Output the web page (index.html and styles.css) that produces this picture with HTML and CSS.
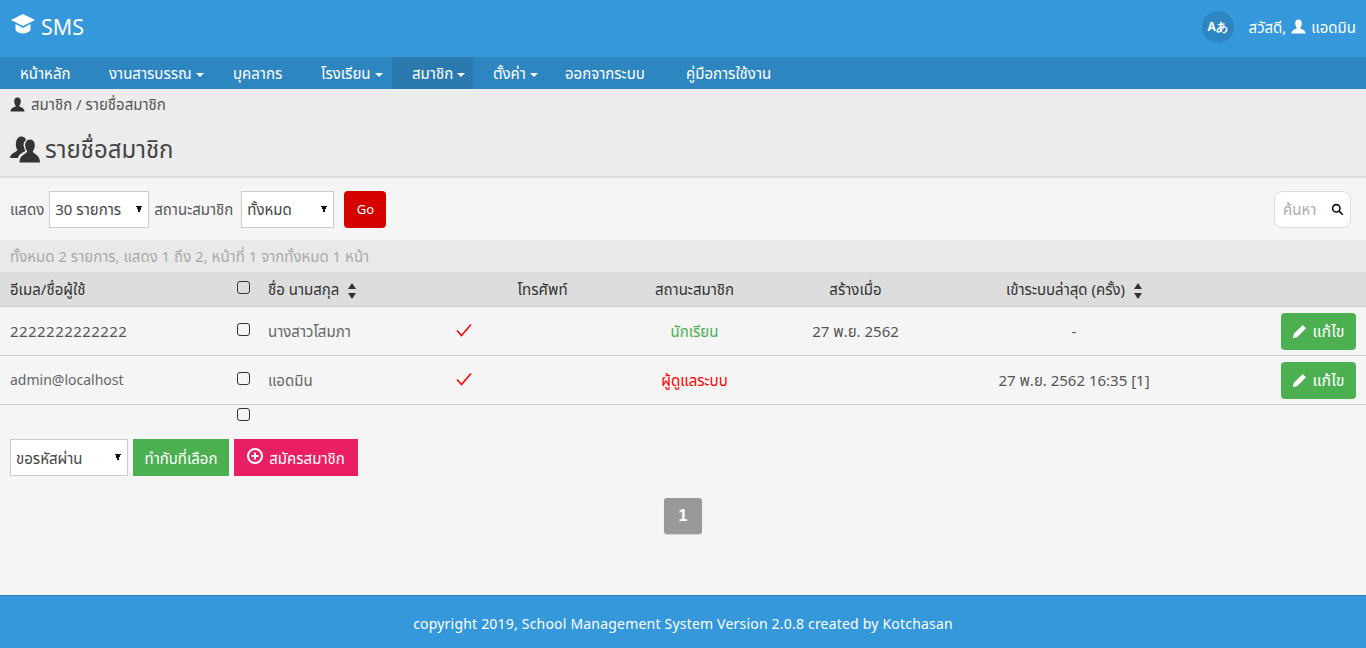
FILE: index.html
```html
<!DOCTYPE html>
<html lang="th">
<head>
	<title>รายชื่อสมาชิก</title>
	<meta charset="utf-8">
	<link rel="stylesheet" href="styles.css">
</head>
<body>
<header class="topbar">
	<a class="logo">
		<svg class="logo-icon" viewBox="0 0 24 20"><path d="M12 0 L24 6 L12 12 L0 6 Z"/><path d="M4.500 10 L12 14 L19.500 10 V16 C17 20.500 7 20.500 4.500 16 Z"/></svg>
		<span>SMS</span>
	</a>
	<div class="user">
		<span class="lang">Aあ</span>
		<span>สวัสดี,</span>
		<svg class="icon-user" viewBox="0 0 16 16"><path d="M8 0.500 C10.500 0.500 11.800 2.500 11.500 5 C11.300 7 10.500 8.500 9.800 9.500 C10.500 11 15.500 11 15.500 15.500 H0.500 C0.500 11 5.500 11 6.200 9.500 C5.500 8.500 4.700 7 4.500 5 C4.200 2.500 5.500 0.500 8 0.500 Z"/></svg>
		<span>แอดมิน</span>
	</div>
</header>
<nav class="menu">
	<a class="m1">หน้าหลัก</a>
	<a class="m2 caret">งานสารบรรณ</a>
	<a class="m3">บุคลากร</a>
	<a class="m4 caret">โรงเรียน</a>
	<a class="m5 caret active">สมาชิก</a>
	<a class="m6 caret">ตั้งค่า</a>
	<a class="m7">ออกจากระบบ</a>
	<a class="m8">คู่มือการใช้งาน</a>
</nav>
<section class="head">
	<div class="crumbs">
		<svg class="icon-crumb" viewBox="0 0 16 16"><path d="M8 0.500 C10.500 0.500 11.800 2.500 11.500 5 C11.300 7 10.500 8.500 9.800 9.500 C10.500 11 15.500 11 15.500 15.500 H0.500 C0.500 11 5.500 11 6.200 9.500 C5.500 8.500 4.700 7 4.500 5 C4.200 2.500 5.500 0.500 8 0.500 Z"/></svg>
		<span>สมาชิก / รายชื่อสมาชิก</span>
	</div>
	<h1>
		<svg class="icon-users" viewBox="0 0 30 27"><path d="M11 0.500 C14 0.500 15.500 2 16 4 C13.500 5.500 13 8.500 14 11.500 C14.500 13 15 14 15.500 15 C13 16.500 9 17.500 8 22 H0 C0 17 6.500 16.500 7.500 14 C6 12 5.500 9.500 6 6.500 C6.500 3 8.500 0.500 11 0.500 Z"/><path d="M20 3.500 C23.500 3.500 25 6.500 24.800 10 C24.600 12.500 23.500 14.500 22.700 15.500 C23.500 18 30 18.500 30 26.500 H9.500 C9.500 18.500 16.500 18 17.300 15.500 C16.500 14.500 15.400 12.500 15.200 10 C15 6.500 16.500 3.500 20 3.500 Z"/></svg>
		<span>รายชื่อสมาชิก</span>
	</h1>
</section>
<form class="filters">
	<label>แสดง</label>
	<select class="sel-count"><option>30 รายการ</option></select>
	<label class="status-label">สถานะสมาชิก</label>
	<select class="sel-status"><option>ทั้งหมด</option></select>
	<button type="button" class="btn-go">Go</button>
	<div class="search">
		<span>ค้นหา</span>
		<svg viewBox="0 0 16 16"><circle cx="6.500" cy="6.500" r="4.500"/><path d="M10 10 L14.500 14.500"/></svg>
	</div>
</form>
<div class="summary">ทั้งหมด 2 รายการ, แสดง 1 ถึง 2, หน้าที่ 1 จากทั้งหมด 1 หน้า</div>
<table class="members">
	<colgroup>
		<col class="c-email"><col class="c-check"><col class="c-name"><col class="c-tick"><col class="c-phone"><col class="c-status"><col class="c-created"><col class="c-login"><col class="c-edit">
	</colgroup>
	<thead>
		<tr>
			<th>อีเมล/ชื่อผู้ใช้</th>
			<th class="check"><span class="cb"></span></th>
			<th>ชื่อ นามสกุล <span class="sort"></span></th>
			<th></th>
			<th class="center">โทรศัพท์</th>
			<th class="center">สถานะสมาชิก</th>
			<th class="center">สร้างเมื่อ</th>
			<th class="center">เข้าระบบล่าสุด (ครั้ง) <span class="sort"></span></th>
			<th></th>
		</tr>
	</thead>
	<tbody>
		<tr>
			<td class="digits">2222222222222</td>
			<td class="check"><span class="cb"></span></td>
			<td class="soft">นางสาวโสมภา</td>
			<td class="center"><svg class="tick" viewBox="0 0 16 14"><path d="M1 7.500 L5.500 12.500 L15 1.500"/></svg></td>
			<td></td>
			<td class="center student">นักเรียน</td>
			<td class="center">27 พ.ย. 2562</td>
			<td class="center">-</td>
			<td class="edit"><button type="button" class="btn-edit"><svg viewBox="0 0 16 16"><path d="M11.500 1 L15 4.500 L5.500 14 L1 15 L2 10.500 Z"/></svg>แก้ไข</button></td>
		</tr>
		<tr>
			<td class="soft latin">admin@localhost</td>
			<td class="check"><span class="cb"></span></td>
			<td class="soft">แอดมิน</td>
			<td class="center"><svg class="tick" viewBox="0 0 16 14"><path d="M1 7.500 L5.500 12.500 L15 1.500"/></svg></td>
			<td></td>
			<td class="center admin">ผู้ดูแลระบบ</td>
			<td></td>
			<td class="center">27 พ.ย. 2562 16:35 [1]</td>
			<td class="edit"><button type="button" class="btn-edit"><svg viewBox="0 0 16 16"><path d="M11.500 1 L15 4.500 L5.500 14 L1 15 L2 10.500 Z"/></svg>แก้ไข</button></td>
		</tr>
	</tbody>
	<tfoot>
		<tr>
			<td></td>
			<td class="check"><span class="cb plain"></span></td>
			<td colspan="7"></td>
		</tr>
	</tfoot>
</table>
<div class="actions">
	<select class="sel-action"><option>ขอรหัสผ่าน</option></select>
	<button type="button" class="btn-apply">ทำกับที่เลือก</button>
	<button type="button" class="btn-add"><svg viewBox="0 0 16 16"><circle cx="8" cy="8" r="7"/><path d="M8 4.500 V11.500 M4.500 8 H11.500"/></svg>สมัครสมาชิก</button>
</div>
<div class="pager"><a>1</a></div>
<footer class="foot">copyright 2019, School Management System Version 2.0.8 created by Kotchasan</footer>
</body>
</html>
```

FILE: styles.css
```css
html, body {
	margin: 0;
	padding: 0;
}
body {
	height: 648px;
	overflow: hidden;
	background-color: #F5F5F5;
	color: #555;
	font-family: "Noto Sans", "Noto Sans Thai", "Open Sans", sans-serif;
	font-size: 15px;
	line-height: 20px;
}
.topbar {
	height: 57px;
	background-color: #3498DB;
	color: #fff;
	display: flex;
	align-items: center;
	justify-content: space-between;
	padding: 0 10px 4px 11px;
	box-sizing: border-box;
}
.logo {
	display: flex;
	align-items: center;
	gap: 6px;
	font-size: 21.500px;
}
.logo-icon {
	width: 24px;
	height: 20px;
	fill: #fff;
	margin-bottom: 6px;
}
.user {
	display: flex;
	align-items: center;
	gap: 5px;
}
.lang {
	width: 32px;
	height: 32px;
	border-radius: 50%;
	background-color: #2E86C1;
	font-size: 12px;
	font-weight: bold;
	text-align: center;
	line-height: 32px;
	margin-right: 10px;
}
.icon-user {
	width: 15px;
	height: 15px;
	fill: #fff;
}
.menu {
	height: 32px;
	background-color: #2E86C1;
	display: flex;
	color: #fff;
	line-height: 32px;
}
.menu a {
	display: block;
	box-sizing: border-box;
	padding-left: 20px;
}
.menu .m1 { width: 89px; }
.menu .m2 { width: 124px; }
.menu .m3 { width: 88px; }
.menu .m4 { width: 91px; }
.menu .m5 { width: 81px; }
.menu .m6 { width: 72px; }
.menu .m7 { width: 121px; }
.menu .m8 { width: 150px; }
.menu .active {
	background-color: #2A7AB0;
}
.caret::after {
	content: "";
	display: inline-block;
	margin-left: 4px;
	vertical-align: middle;
	border-top: 4px solid #fff;
	border-left: 4px solid transparent;
	border-right: 4px solid transparent;
}
.head {
	height: 89px;
	box-sizing: border-box;
	background-color: #ECECEC;
	border-bottom: 2px solid #DDD;
	padding: 5px 10px 0;
}
.crumbs {
	display: flex;
	align-items: center;
	gap: 6px;
}
.icon-crumb {
	width: 15px;
	height: 15px;
	fill: #333;
}
.head h1 {
	margin: 20px 0 0;
	display: flex;
	align-items: center;
	gap: 5px;
	font-size: 24px;
	font-weight: normal;
	line-height: 30px;
	color: #444;
}
.icon-users {
	width: 30px;
	height: 27px;
	fill: #333;
}
.filters {
	height: 62px;
	display: flex;
	align-items: center;
	gap: 5px;
	padding: 0 15px 0 10px;
	box-sizing: border-box;
}
.status-label {
	margin-right: 3px;
}
select {
	height: 37px;
	border: 1px solid #CCC;
	background-color: #fff;
	background-image: linear-gradient(to top right, transparent 50%, #111 50%), linear-gradient(to top left, transparent 50%, #111 50%);
	background-size: 3px 7px;
	background-repeat: no-repeat;
	background-position: right 9px center, right 6px center;
	font: inherit;
	color: #444;
	padding: 0 0 0 5px;
	appearance: none;
	border-radius: 0;
}
.sel-count { width: 100px; }
.sel-status { width: 93px; }
.sel-action { width: 118px; }
.btn-go {
	width: 42px;
	height: 37px;
	margin-left: 5px;
	border: 0;
	border-radius: 4px;
	background-color: #D50000;
	color: #fff;
	font: inherit;
	font-size: 13px;
}
.search {
	margin-left: auto;
	width: 77px;
	height: 37px;
	box-sizing: border-box;
	border: 1px solid #DDD;
	border-radius: 8px;
	background-color: #fff;
	color: #AAA;
	display: flex;
	align-items: center;
	justify-content: space-between;
	padding: 0 6px 0 8px;
}
.search svg {
	width: 13px;
	height: 13px;
	fill: none;
	stroke: #111;
	stroke-width: 2;
}
.summary {
	height: 32px;
	line-height: 32px;
	padding-left: 10px;
	background-color: #E9E9E9;
	color: #AAA;
}
.members {
	width: 1366px;
	table-layout: fixed;
	border-collapse: collapse;
}
.c-email { width: 233px; }
.c-check { width: 25px; }
.c-name { width: 187px; }
.c-tick { width: 38px; }
.c-phone { width: 119px; }
.c-status { width: 185px; }
.c-created { width: 137px; }
.c-login { width: 300px; }
.members th, .members td {
	padding: 0 0 0 10px;
	text-align: left;
}
.members th {
	height: 34px;
	background-color: #DDD;
	border-bottom: 1px solid #CCC;
	font-weight: normal;
	color: #333;
}
.members tbody td {
	height: 48px;
	border-bottom: 1px solid #CCC;
}
.members tfoot td {
	height: 18px;
}
.members .center {
	text-align: center;
	padding: 0;
}
.members .check {
	padding: 0 0 0 4px;
}
.cb {
	display: block;
	width: 11px;
	height: 11px;
	margin-bottom: 4px;
	border: 1px solid #333;
	border-radius: 3px;
}
.cb.plain {
	margin-bottom: 0;
}
.soft { color: #666; }
.digits {
	letter-spacing: 0.450px;
}
.members .latin {
	font-size: 14px;
}
.student { color: #4CAF50; }
.admin { color: #F00; }
.sort {
	display: inline-block;
	width: 0;
	height: 16px;
	margin-left: 5px;
	vertical-align: middle;
	border-left: 4px solid transparent;
	border-right: 4px solid transparent;
	position: relative;
}
.sort::before, .sort::after {
	content: "";
	position: absolute;
	left: -4px;
	border-left: 4px solid transparent;
	border-right: 4px solid transparent;
}
.sort::before {
	top: 0;
	border-bottom: 6px solid #333;
}
.sort::after {
	bottom: 0;
	border-top: 6px solid #333;
}
.tick {
	width: 16px;
	height: 14px;
	fill: none;
	stroke: #F00;
	stroke-width: 1.5;
	margin-bottom: 4px;
	vertical-align: middle;
}
.members .edit {
	padding: 0 10px 0 0;
	text-align: right;
}
.btn-edit {
	width: 75px;
	height: 37px;
	border: 0;
	border-radius: 4px;
	background-color: #4CAF50;
	color: #fff;
	font: inherit;
	font-size: 16px;
	vertical-align: middle;
	padding: 0;
}
.btn-edit svg {
	width: 15px;
	height: 15px;
	fill: #fff;
	margin-right: 5px;
	vertical-align: -2px;
}
.actions {
	display: flex;
	gap: 5px;
	padding: 16px 0 0 10px;
}
.btn-apply, .btn-add {
	height: 37px;
	border: 0;
	color: #fff;
	font: inherit;
	padding: 0;
}
.btn-apply {
	width: 96px;
	background-color: #4CAF50;
}
.btn-add {
	width: 124px;
	background-color: #E91E63;
}
.btn-add svg {
	width: 16px;
	height: 16px;
	fill: none;
	stroke: #fff;
	stroke-width: 2;
	margin-right: 6px;
	vertical-align: 0;
}
.pager {
	display: flex;
	justify-content: center;
	padding-top: 22px;
}
.pager a {
	width: 38px;
	height: 36px;
	border-radius: 3px;
	background-color: #999;
	color: #fff;
	font-family: "Liberation Sans", sans-serif;
	font-size: 16px;
	font-weight: bold;
	line-height: 36px;
	text-align: center;
	box-shadow: 0 1px 1px rgba(0,0,0,0.15);
}
.foot {
	margin-top: 61px;
	height: 53px;
	box-sizing: border-box;
	background-color: #3498DB;
	border-top: 1px solid #2E86C1;
	color: #fff;
	text-align: center;
	font-size: 14px;
	letter-spacing: 0.200px;
	line-height: 55px;
}
```
